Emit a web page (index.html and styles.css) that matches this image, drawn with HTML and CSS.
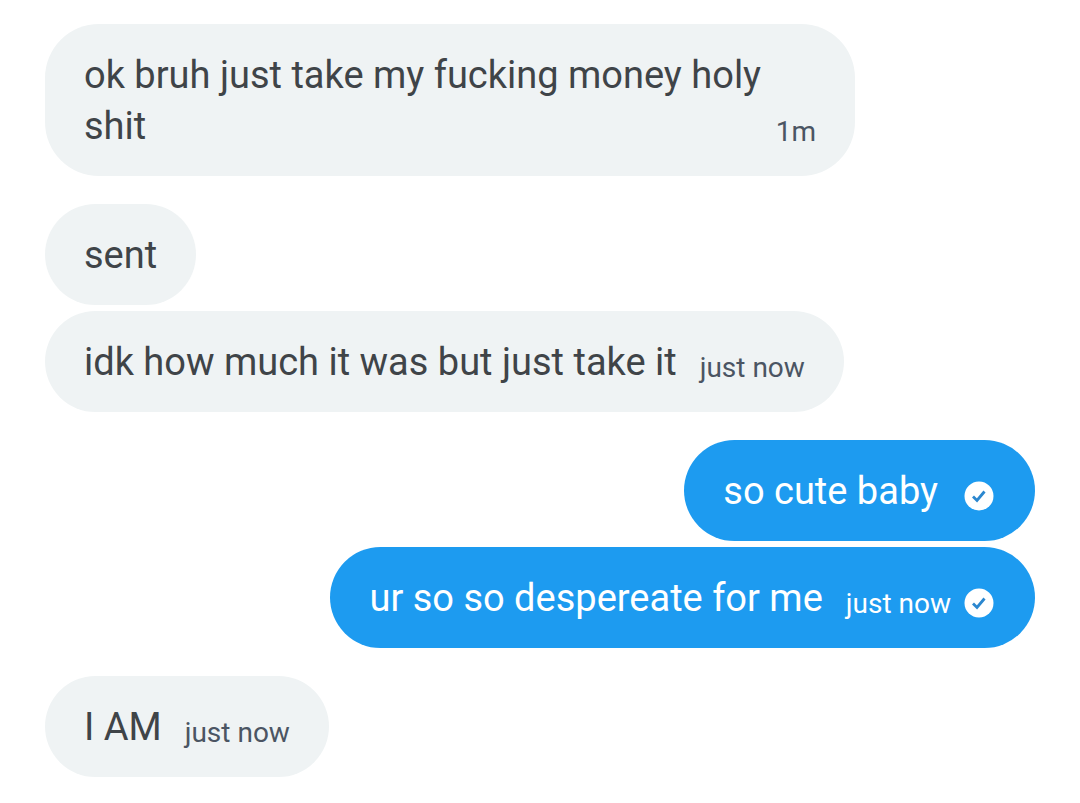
FILE: index.html
```
<!DOCTYPE html>
<html lang="en">
<head>
    <meta charset="UTF-8">
    <meta name="viewport" content="width=device-width, initial-scale=1.0">
    <title>Messages</title>
    <link rel="stylesheet" href="styles.css">
</head>
<body>
    <main class="chat">
        <div class="group">
            <div class="message long">
                <p class="text">ok bruh just take my fucking money holy shit</p>
                <time class="time">1m</time>
            </div>
        </div>
        <div class="group">
            <div class="message">
                <p class="text">sent</p>
            </div>
            <div class="message">
                <p class="text">idk how much it was but just take it</p>
                <time class="time">just now</time>
            </div>
        </div>
        <div class="group">
            <div class="message sent">
                <p class="text">so cute baby</p>
                <svg class="check" viewBox="0 0 30 30" role="img" aria-label="Sent">
                    <circle cx="15" cy="15" r="14.500" fill="#fff"/>
                    <path d="M9 15.500l4 4 7.500-9" fill="none" stroke="#2b87cf" stroke-width="2.800"/>
                </svg>
            </div>
            <div class="message sent">
                <p class="text">ur so so despereate for me</p>
                <time class="time">just now</time>
                <svg class="check" viewBox="0 0 30 30" role="img" aria-label="Sent">
                    <circle cx="15" cy="15" r="14.500" fill="#fff"/>
                    <path d="M9 15.500l4 4 7.500-9" fill="none" stroke="#2b87cf" stroke-width="2.800"/>
                </svg>
            </div>
        </div>
        <div class="group">
            <div class="message">
                <p class="text">I AM</p>
                <time class="time">just now</time>
            </div>
        </div>
    </main>
</body>
</html>
```
FILE: styles.css
```
* {
    box-sizing: border-box;
}

body {
    margin: 0;
    background: #fff;
    font-family: Roboto, Arial, sans-serif;
}

.chat {
    display: flex;
    flex-direction: column;
    gap: 28px;
    padding: 24px 45px;
}

.group {
    display: flex;
    flex-direction: column;
    align-items: flex-start;
    gap: 6px;
}

.message {
    display: flex;
    align-items: flex-end;
    max-width: 75vw;
    padding: 26px 39px 24px;
    border-radius: 54px;
    background: #eff3f4;
    color: #3f4448;
}

.message.long {
    width: 75vw;
    justify-content: space-between;
}

.message.sent {
    align-self: flex-end;
    background: #1d9bf0;
    color: #fff;
}

.text {
    margin: 0;
    font-size: 38px;
    line-height: 51px;
}

.time {
    flex-shrink: 0;
    margin-left: 23px;
    font-size: 28px;
    line-height: 40px;
    color: #4b5563;
}

/* the stamp tucks in under the last word of the first line */
.long .time {
    margin-left: -10px;
}

.sent .time {
    color: #fff;
}

.check {
    flex-shrink: 0;
    width: 30px;
    height: 30px;
    margin: 0 2px 6px 26px;
}

.time + .check {
    margin-left: 13px;
}
```
